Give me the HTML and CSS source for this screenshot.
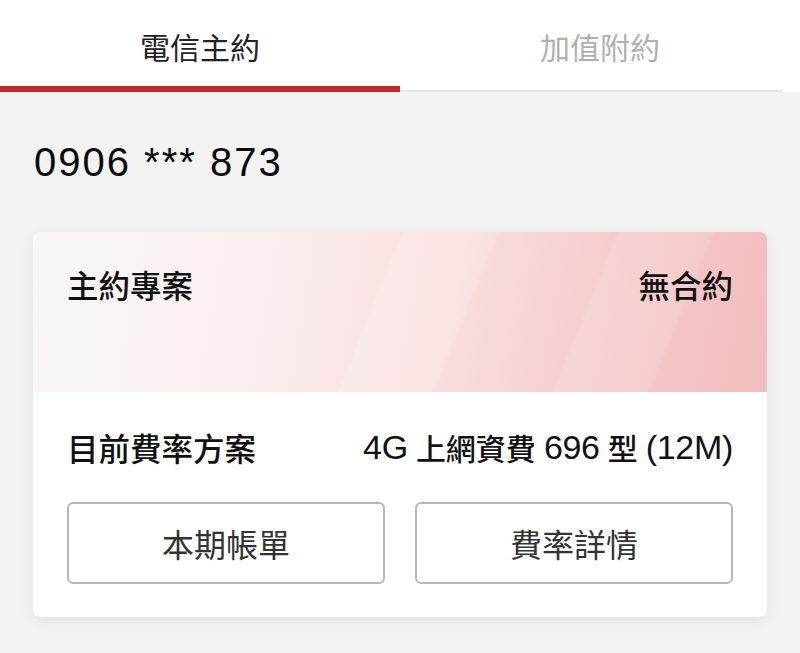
FILE: index.html
```html
<!DOCTYPE html>
<html lang="zh-Hant">
<head>
<meta charset="utf-8">
<title>電信主約</title>
<link rel="stylesheet" href="styles.css">
</head>
<body>
<div class="tabs">
  <div class="tab active">電信主約</div>
  <div class="tab">加值附約</div>
</div>
<div class="phone">0906 *** 873</div>
<div class="card">
  <div class="card-top">
    <span class="label">主約專案</span>
    <span class="label">無合約</span>
  </div>
  <div class="card-body">
    <div class="row">
      <span class="label">目前費率方案</span>
      <span class="plan"><span class="lat">4G</span><span class="cjk">上網資費</span><span class="lat">696</span><span class="cjk">型</span><span class="lat">(12M)</span></span>
    </div>
    <div class="buttons">
      <div class="btn">本期帳單</div>
      <div class="btn">費率詳情</div>
    </div>
  </div>
</div>
</body>
</html>
```
FILE: styles.css
```css
* { box-sizing: border-box; }
html, body { margin: 0; padding: 0; }
body {
  background: #f3f3f3;
  font-family: "Liberation Sans", "Noto Sans CJK TC", sans-serif;
  color: #111;
  width: 800px;
  height: 653px;
  overflow: hidden;
}
.tabs {
  display: flex;
  background: #fff;
  height: 92px;
}
.tab {
  width: 383px;
  height: 92px;
  display: flex;
  align-items: center;
  justify-content: center;
  padding-top: 2px;
  padding-left: 17px;
  font-family: "Noto Sans CJK TC", sans-serif;
  font-size: 30px;
  color: #b0b0b0;
  border-bottom: 2px solid #e4e4e4;
}
.tab.active {
  width: 400px;
  padding-left: 0;
  color: #222;
  border-bottom: 6px solid #c32b28;
  padding-top: 6px;
}
.phone {
  font-size: 40px;
  letter-spacing: 2px;
  padding: 50px 0 0 34px;
  line-height: 40px;
  height: 140px;
  color: #0a0a0a;
}
.card {
  margin: 0 33px;
  background: #fff;
  border-radius: 7px;
  overflow: hidden;
  box-shadow: 0 4px 14px rgba(0,0,0,0.08);
  height: 385px;
}
.card-top {
  height: 160px;
  display: flex;
  justify-content: space-between;
  align-items: flex-start;
  padding: 34px 34px 0 34px;
  background:
    linear-gradient(112deg, rgba(255,255,255,0) 0%, rgba(255,255,255,0) 46%, rgba(255,255,255,0.18) 46.5%, rgba(255,255,255,0.18) 58%, rgba(255,255,255,0) 58.5%),
    linear-gradient(112deg, rgba(255,255,255,0) 0%, rgba(255,255,255,0) 73%, rgba(255,255,255,0.12) 73.5%, rgba(255,255,255,0.12) 85%, rgba(255,255,255,0) 85.5%),
    linear-gradient(100deg, #f8f6f6 0%, #fbefef 30%, #f9dfdf 55%, #f5caca 80%, #f2bcbc 100%);
}
.label {
  font-family: "Noto Sans CJK TC", sans-serif;
  font-size: 31.5px;
  font-weight: 500;
  color: #111;
  line-height: 36px;
}
.card-body {
  padding: 35px 34px 0 34px;
}
.row {
  display: flex;
  justify-content: space-between;
  align-items: center;
  height: 40px;
}
.plan {
  display: flex;
  align-items: center;
  gap: 8px;
  color: #111;
  line-height: 36px;
}
.lat {
  font-family: "Liberation Sans", sans-serif;
  font-size: 34px;
  letter-spacing: -0.3px;
}
.cjk {
  font-family: "Noto Sans CJK TC", sans-serif;
  font-size: 30px;
  font-weight: 500;
}
.buttons {
  display: flex;
  justify-content: space-between;
  margin-top: 35px;
}
.btn {
  width: 318px;
  height: 82px;
  border: 2px solid #b7b7b7;
  border-radius: 6px;
  display: flex;
  align-items: center;
  justify-content: center;
  font-family: "Noto Sans CJK TC", sans-serif;
  font-size: 32px;
  color: #333;
}
```
